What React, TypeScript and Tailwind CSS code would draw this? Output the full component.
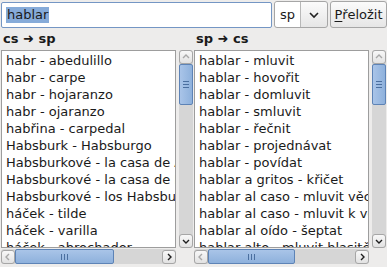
import { useState } from "react";

const LEFT_ROWS = [
  "habr - abedulillo",
  "habr - carpe",
  "habr - hojaranzo",
  "habr - ojaranzo",
  "habřina - carpedal",
  "Habsburk - Habsburgo",
  "Habsburkové - la casa de Austria",
  "Habsburkové - la casa de Habsburgo",
  "Habsburkové - los Habsburgo",
  "háček - tilde",
  "háček - varilla",
  "háček - abrochador",
];

const RIGHT_ROWS = [
  "hablar - mluvit",
  "hablar - hovořit",
  "hablar - domluvit",
  "hablar - smluvit",
  "hablar - řečnit",
  "hablar - projednávat",
  "hablar - povídat",
  "hablar a gritos - křičet",
  "hablar al caso - mluvit věcně",
  "hablar al caso - mluvit k věci",
  "hablar al oído - šeptat",
  "hablar alto - mluvit hlasitě",
];

// small chevron used on scrollbar steppers
const Chevron = ({ dir }: { dir: "up" | "down" | "left" | "right" }) => {
  const d = {
    up: "M2 6 L5 3 L8 6",
    down: "M2 4 L5 7 L8 4",
    left: "M6 2 L3 5 L6 8",
    right: "M4 2 L7 5 L4 8",
  }[dir];
  const dark = dir === "down" || dir === "right";
  return (
    <svg width="10" height="10" viewBox="0 0 10 10">
      <path d={d} fill="none" stroke={dark ? "#1e1e1e" : "#a8a8a8"} strokeWidth="1.4" />
    </svg>
  );
};

const Stepper = ({ dir }: { dir: "up" | "down" | "left" | "right" }) => (
  <div className="flex items-center justify-center w-[14px] h-[14px] shrink-0 rounded-[3px] border border-[#a6a6a6] bg-gradient-to-b from-[#f8f8f8] to-[#e2e2e2]">
    <Chevron dir={dir} />
  </div>
);

function VScroll() {
  return (
    <div className="flex flex-col w-[14px] h-[198px] bg-[#d6d6d6] rounded-[3px]">
      <Stepper dir="up" />
      <div className="flex items-center justify-center h-[41px] border border-[#5d83b6] rounded-[2px] bg-gradient-to-r from-[#a9c4e8] to-[#8eb1dc]">
        <div className="flex flex-col gap-[2px]">
          <div className="w-[6px] h-px bg-[#4b6f9f]" />
          <div className="w-[6px] h-px bg-[#4b6f9f]" />
          <div className="w-[6px] h-px bg-[#4b6f9f]" />
        </div>
      </div>
      <div className="flex-1" />
      <Stepper dir="down" />
    </div>
  );
}

function HScroll({ thumb }: { thumb: number }) {
  return (
    <div className="flex w-full h-[15px] bg-[#d6d6d6] rounded-[3px] items-center">
      <Stepper dir="left" />
      <div
        className="flex items-center justify-center h-[15px] border border-[#5d83b6] rounded-[2px] bg-gradient-to-b from-[#a9c4e8] to-[#8eb1dc]"
        style={{ width: thumb }}
      >
        <div className="flex gap-[2px]">
          <div className="w-px h-[6px] bg-[#4b6f9f]" />
          <div className="w-px h-[6px] bg-[#4b6f9f]" />
          <div className="w-px h-[6px] bg-[#4b6f9f]" />
        </div>
      </div>
      <div className="flex-1" />
      <Stepper dir="right" />
    </div>
  );
}

function Panel({ title, rows, thumb, wide }: { title: string; rows: string[]; thumb: number; wide?: boolean }) {
  return (
    <div className={`flex flex-col ${wide ? "w-[194px]" : "w-[193px]"} pl-px`}>
      <div className="h-[22px] flex items-center pl-[2px] font-bold">{title}</div>
      <div className="flex gap-[3px]">
        <div className="flex flex-col w-[175px]">
          <div className="h-[198px] bg-white border border-[#9d9d9d] overflow-hidden pt-px">
            {rows.map((r) => (
              <div key={r} className="h-[17px] leading-[17px] pl-[4px] whitespace-nowrap overflow-hidden text-[#1a1a1a]">
                {r}
              </div>
            ))}
          </div>
          <div className="mt-px">
            <HScroll thumb={thumb} />
          </div>
        </div>
        <VScroll />
      </div>
    </div>
  );
}

export default function App() {
  const [query] = useState("hablar");
  return (
    <div
      className="w-[387px] h-[267px] bg-[#edeceb] text-[13px] text-[#1a1a1a] overflow-hidden"
      style={{ fontFamily: '"DejaVu Sans", sans-serif' }}
    >
      <div className="flex items-center h-[28px] pt-px pl-px gap-[2px]">
        <div className="w-[271px] h-[26px] bg-white border border-[#7496c4] rounded-[2px] flex items-center pl-[4px]">
          <span className="bg-[#86abd9] text-[#1a1a1a] leading-[16px] px-px">{query}</span>
        </div>
        <div className="flex w-[54px] h-[27px] border border-[#a6a6a6] rounded-[3px] bg-gradient-to-b from-[#fbfbfb] to-[#e6e6e6]">
          <div className="w-[26px] flex items-center pl-[5px] border-r border-[#b8b8b8] bg-white rounded-l-[3px]">sp</div>
          <div className="flex-1 flex items-center justify-center">
            <svg width="12" height="8" viewBox="0 0 12 8">
              <path d="M2 2 L6 6 L10 2" fill="none" stroke="#222" strokeWidth="1.6" />
            </svg>
          </div>
        </div>
        <div className="w-[57px] h-[27px] border border-[#a6a6a6] rounded-[3px] bg-gradient-to-b from-[#fbfbfb] to-[#e6e6e6] flex items-center justify-center">
          <span className="underline underline-offset-2 decoration-1">P</span>řeložit
        </div>
      </div>
      <div className="flex">
        <Panel title="cs ➜ sp" rows={LEFT_ROWS} thumb={99} />
        <Panel title="sp ➜ cs" rows={RIGHT_ROWS} thumb={87} wide />
      </div>
    </div>
  );
}
